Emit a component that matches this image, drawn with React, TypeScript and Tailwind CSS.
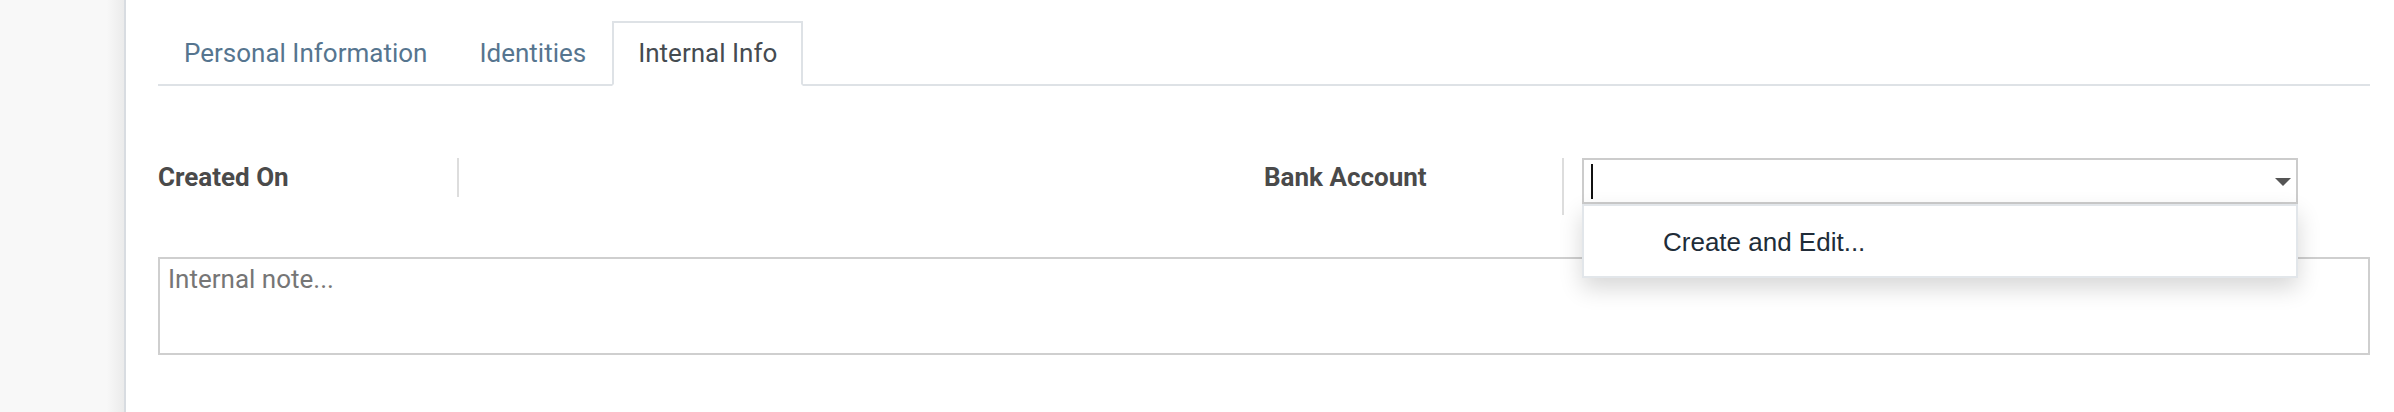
import { useState } from "react";

const tabs = ["Personal Information", "Identities", "Internal Info"];

const App = () => {
  const [active, setActive] = useState("Internal Info");

  return (
    <div className="flex w-full h-[412px] bg-white font-['Roboto',sans-serif] text-[26px] leading-[39px] overflow-hidden">
      <aside className="w-[126px] shrink-0 border-r-2 border-[#d8dce1] bg-[linear-gradient(to_right,#f8f8f8_86%,#ebebeb)]" />

      <main className="flex-1 pl-[32px] pr-[24px] pt-[21px]">
        <ul className="flex border-b-2 border-[#dee2e6]">
          {tabs.map((tab) => {
            const isActive = tab === active;
            return (
              <li key={tab} className="-mb-[2px]">
                <button
                  type="button"
                  onClick={() => setActive(tab)}
                  className={
                    isActive
                      ? "block px-[24px] py-[11px] border-2 border-[#dee2e6] border-b-white bg-white text-[#454b51]"
                      : "block px-[24px] py-[11px] border-2 border-transparent text-[#56758f]"
                  }
                >
                  {tab}
                </button>
              </li>
            );
          })}
        </ul>

        <div className="mt-[72px] grid grid-cols-2">
          <div className="flex items-start">
            <div className="w-[301px] h-[39px] border-r-2 border-[#dddddd] font-bold text-[#4a4a4a]">
              Created On
            </div>
          </div>

          <div className="flex items-start">
            <div className="w-[300px] h-[57px] border-r-2 border-[#dddddd] font-bold text-[#4a4a4a]">
              Bank Account
            </div>
            <div className="relative ml-[18px] w-[716px]">
              <div className="flex items-center h-[46px] border-2 border-[#cccccc] bg-white pl-[7px] pr-[5px]">
                <span className="w-[2px] h-[35px] bg-[#111111]" />
                <svg
                  className="ml-auto mt-[2px]"
                  width="16"
                  height="8"
                  viewBox="0 0 16 8"
                >
                  <path d="M0 0 H16 L8 8 Z" fill="#555555" />
                </svg>
              </div>
              <div className="absolute left-0 top-[46px] z-10 w-full h-[74px] border-2 border-[#e2e6ea] bg-white shadow-[0_10px_22px_rgba(0,0,0,0.16)] flex items-center pl-[79px]">
                <span className="font-['Liberation_Sans',Arial,sans-serif] text-[26px] text-[#202c38] mt-[3px]">
                  Create and Edit...
                </span>
              </div>
            </div>
          </div>
        </div>

        <textarea
          placeholder="Internal note..."
          className="mt-[42px] block w-full h-[98px] resize-none border-2 border-[#cfcfcf] px-[8px] pt-[1px] text-[#333] placeholder:text-[#767676] outline-none"
        />
      </main>
    </div>
  );
};

export default App;
